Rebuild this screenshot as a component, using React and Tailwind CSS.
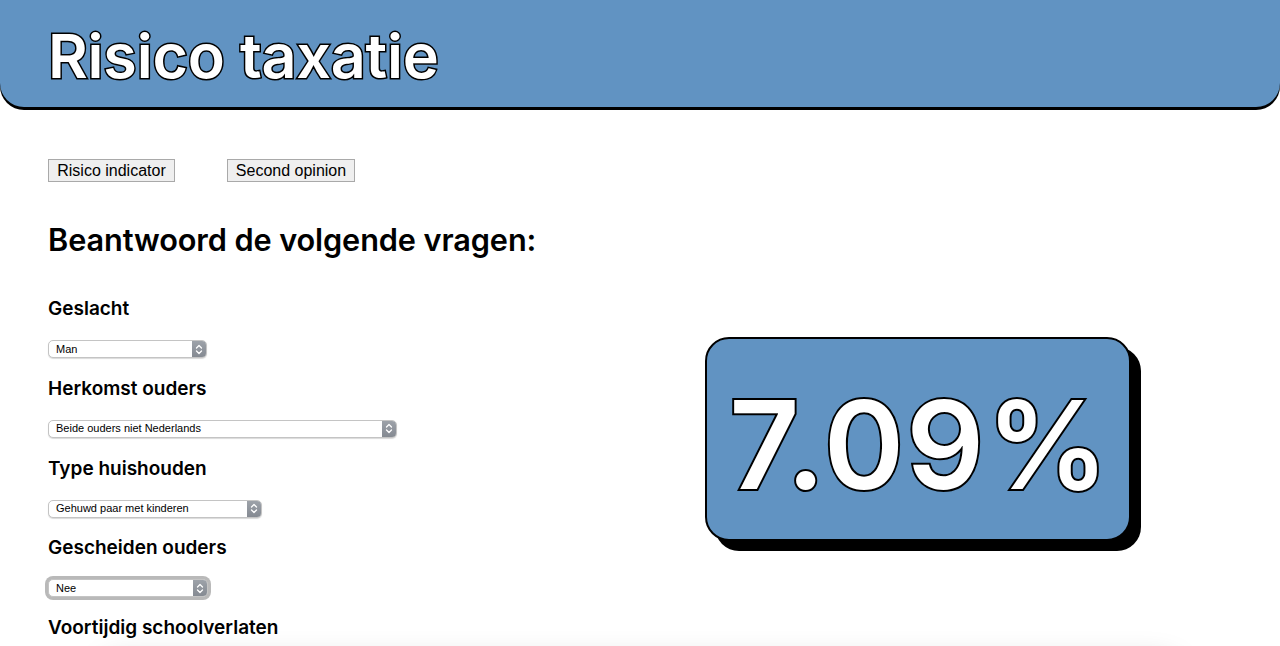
import React from "react";

function Chevrons() {
  return (
    <svg width="8" height="11" viewBox="0 0 8 11" fill="none" stroke="white" strokeWidth="1.3" strokeLinecap="round" strokeLinejoin="round">
      <path d="M1.5 4 L4 1.5 L6.5 4" />
      <path d="M1.5 7 L4 9.5 L6.5 7" />
    </svg>
  );
}

function Select({ value, width, focus }) {
  return (
    <div
      className={`flex h-[18px] items-stretch rounded-[5px] border border-[#c4c4c4] bg-white shadow-[0_1px_1px_rgba(0,0,0,0.15)] ${focus ? "ring-[3px] ring-[#b9b9b9]" : ""}`}
      style={{ width }}
    >
      <div className="flex flex-1 items-center pl-[7px] font-['Liberation_Sans',sans-serif] text-[11px] leading-none text-black">{value}</div>
      <div className="flex w-[14px] items-center justify-center rounded-r-[4px] bg-gradient-to-b from-[#9da2a9] to-[#858a92]">
        <Chevrons />
      </div>
    </div>
  );
}

function Question({ label, children }) {
  return (
    <div className="flex flex-col pb-[18.75px]">
      <h3 className="text-[19px] font-semibold leading-[24px] text-black">{label}</h3>
      <div className="pt-[19px]">{children}</div>
    </div>
  );
}

export default function App() {
  return (
    <div className="relative h-[646px] w-[1280px] overflow-hidden bg-white font-['Inter',sans-serif]">
      <header className="h-[107px] rounded-b-[24px] bg-[#6193c2] pl-[48px] pt-[20px] shadow-[0_3px_0_#000]">
        <h1
          className="text-[61px] font-semibold leading-[72px] tracking-[-0.2px] text-white"
          style={{ WebkitTextStroke: "3px #000", paintOrder: "stroke fill" }}
        >
          Risico taxatie
        </h1>
      </header>

      <div className="flex gap-[52px] pl-[48px] pt-[52px]">
        <button className="h-[23px] w-[127px] border border-[#a9a9a9] bg-[#efefef] font-['Liberation_Sans',sans-serif] text-[16px] leading-none text-black">
          Risico indicator
        </button>
        <button className="h-[23px] w-[128px] border border-[#a9a9a9] bg-[#efefef] font-['Liberation_Sans',sans-serif] text-[16px] leading-none text-black">
          Second opinion
        </button>
      </div>

      <div className="flex pl-[48px]">
        <div className="w-[560px]">
          <h2 className="pt-[39px] text-[30.7px] font-semibold leading-[38px] tracking-[-0.1px] text-black">
            Beantwoord de volgende vragen:
          </h2>
          <div className="pt-[38px]">
            <Question label="Geslacht">
              <Select value="Man" width={159} />
            </Question>
            <Question label="Herkomst ouders">
              <Select value="Beide ouders niet Nederlands" width={349} />
            </Question>
            <Question label="Type huishouden">
              <Select value="Gehuwd paar met kinderen" width={214} />
            </Question>
            <Question label="Gescheiden ouders">
              <Select value="Nee" width={160} focus />
            </Question>
            <Question label="Voortijdig schoolverlaten">
              <Select value="Nee" width={160} />
            </Question>
          </div>
        </div>

        <div className="pl-[97px] pt-[155px]">
          <div className="flex h-[204px] w-[426px] items-center justify-center rounded-[24px] border-2 border-black bg-[#6193c2] pt-[12px] shadow-[10px_10px_0_#000]">
            <span
              className="pl-[4px] text-[122px] font-semibold leading-none tracking-[2px] text-white"
              style={{ WebkitTextStroke: "4px #000", paintOrder: "stroke fill" }}
            >
              7.09%
            </span>
          </div>
        </div>
      </div>

      <div className="pointer-events-none absolute left-[100px] right-[100px] top-[660px] h-[40px] rounded-[20px] bg-white shadow-[0_0_30px_rgba(0,0,0,0.18)]" />
    </div>
  );
}
